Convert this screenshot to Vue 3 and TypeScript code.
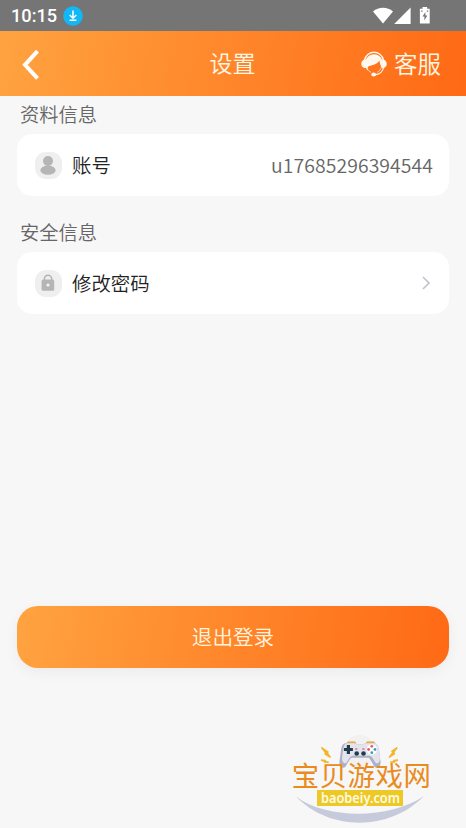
<script setup lang="ts">
interface Row {
  label: string
  icon: 'user' | 'lock'
  value?: string
}
interface Section {
  title: string
  row: Row
}

const sections: Section[] = [
  { title: '资料信息', row: { label: '账号', icon: 'user', value: 'u17685296394544' } },
  { title: '安全信息', row: { label: '修改密码', icon: 'lock' } },
]
</script>

<template>
  <div class="screen">
    <div class="status">
      <span class="time">10:15</span>
      <svg class="download" width="20" height="20" viewBox="0 0 20 20">
        <circle cx="10" cy="10" r="9.8" fill="#12b7f5" />
        <path d="M10 4.4V12M6.7 9l3.3 3.3L13.3 9M6.6 14.3h6.8" fill="none" stroke="#fff" stroke-width="1.5" />
      </svg>
      <svg class="signals" width="60" height="20" viewBox="0 0 60 20">
        <path d="M0 5.4C5.6.4 14.4.4 20 5.4L10 17.6Z" fill="#fff" />
        <path d="M37.6 1.6V18H21.2Z" fill="#fff" />
        <path d="M49.5 1h4.6v1.7h2.6V17.4H46.9V2.7h2.6Z" fill="#fff" />
        <path d="M52.4 6l-2.9 4.6h1.9v3.8l2.9-4.8h-1.9ZM48.2 4.4h1.4v1.3h-1.4ZM53.8 4.4h1.4v1.3h-1.4Z" fill="#757575" />
      </svg>
    </div>

    <header class="header">
      <svg class="back" width="18" height="32" viewBox="0 0 18 32">
        <path d="M15.5 2.2L3 15.8L15.5 29.4" fill="none" stroke="#fff" stroke-width="4" />
      </svg>
      <h1 class="title">设置</h1>
      <div class="service">
        <svg width="26" height="26" viewBox="0 0 26 26">
          <path d="M3.4 9.5C6-1.6 20-1.6 22.6 9.5" fill="none" stroke="#fff8ec" stroke-width="1.5" />
          <path d="M4.4 12C4.8 .2 21.2 .2 21.6 12L20.9 16.8C19.8 15 18.8 12.4 18.4 9.4C16.4 13.4 10.8 14 7.2 15.4C6.5 16.6 6.6 18 7.2 19.8C4.6 17.8 4 14.8 4.4 12Z" fill="#fff8ec" />
          <path d="M3.5 8.8h2.2v8.2H3.5C1.7 17 .3 15 .3 12.8S1.7 8.8 3.5 8.8ZM22.5 8.8h-1.9v8.2h1.9c1.8 0 3.2-1.9 3.2-4.2s-1.4-4-3.2-4Z" fill="#fff8ec" />
          <path d="M22.6 16C22 20.6 18.4 23.5 14 23.6" fill="none" stroke="#fff8ec" stroke-width="1.3" />
          <path d="M6.4 18C7.2 19.6 8.6 20.8 10 21.2M16.4 21.1C18.4 20.2 19.6 18.6 20.4 16.2" fill="none" stroke="#fff8ec" stroke-width=".7" />
          <ellipse cx="12.7" cy="23.5" rx="2.4" ry="1.9" fill="#fff8ec" />
        </svg>
        <span class="service-text">客服</span>
      </div>
    </header>

    <main class="content">
      <section v-for="s in sections" :key="s.title" class="section">
        <h2 class="label">{{ s.title }}</h2>
        <div class="card">
          <span class="badge">
            <svg v-if="s.row.icon === 'user'" width="27" height="27" viewBox="0 0 27 27">
              <circle cx="13" cy="9" r="5" fill="#b5b5b5" />
              <ellipse cx="13" cy="18.2" rx="7.6" ry="4.6" fill="#b5b5b5" />
            </svg>
            <svg v-else width="27" height="27" viewBox="0 0 27 27">
              <path d="M9.3 12V9a3.7 3.7 0 0 1 7.4 0V12" fill="none" stroke="#b5b5b5" stroke-width="1.5" />
              <rect x="6.6" y="9.6" width="12.6" height="11.2" rx="1.5" fill="#b5b5b5" />
              <circle cx="13" cy="15" r="1.6" fill="#f4f4f4" />
            </svg>
          </span>
          <span class="name">{{ s.row.label }}</span>
          <span v-if="s.row.value" class="value">{{ s.row.value }}</span>
          <svg v-else class="chevron" width="10" height="16" viewBox="0 0 10 16">
            <path d="M2 2l6 6-6 6" fill="none" stroke="#c0c4cc" stroke-width="1.7" />
          </svg>
        </div>
      </section>
      <button class="logout" type="button">退出登录</button>
    </main>

    <svg class="watermark" width="146" height="92" viewBox="288 734 146 92">
      <circle cx="359.5" cy="751" r="16" fill="#f1f1f1" />
      <path d="M296 796.5C325 819 389 820 424 796C389 832 329 831 296 796.5Z" fill="#c7cadb" />
      <path d="M347 743.2l1-1.3h7l1 1.3ZM366 743.2l1-1.3h7l1 1.3Z" fill="#edae43" stroke="#edae43" />
      <path d="M346 743.3h9l2 1.3h6l2-1.3h9c3 0 4.4 2.5 5 7l1.5 11c.4 4-1.3 6.4-4 6.4-3 0-4.7-8-8-10h-17c-3.3 2-5 10-8 10-2.7 0-4.4-2.4-4-6.4l1.5-11c.6-4.5 2-7 5-7Z" fill="#aeb0c3" />
      <path d="M346 743.3h9l2 1.3h6l2-1.3h9c3 0 4.4 2.5 5 7l1 8c0 4-2 5.6-3.5 5-2.5-1-3.5-7-7-7.5h-17c-3.5.5-4.5 6.5-7 7.5-1.5.6-3.5-1-3.5-5l1-8c.6-4.5 2-7 5-7Z" fill="#e3e4ed" />
      <path d="M348.4 745v9M343.9 749.5h9" stroke="#203d4d" stroke-width="3.2" />
      <circle cx="356.7" cy="753.5" r="2.3" fill="#203d4d" />
      <circle cx="363.5" cy="753.5" r="2.3" fill="#203d4d" />
      <path d="M355.2 749h2.2M362.3 749h2.2" stroke="#d73b67" stroke-width="1.2" />
      <circle cx="371.8" cy="749.5" r="5.2" fill="#fff" />
      <circle cx="371.8" cy="746.3" r="1.4" fill="#e55b62" />
      <circle cx="371.8" cy="752.7" r="1.4" fill="#35a8a0" />
      <circle cx="368.6" cy="749.5" r="1.4" fill="#e55b62" />
      <circle cx="375" cy="749.5" r="1.4" fill="#3ba1c2" />
      <path d="M321.5 747.5l6.5 4.5-.5 1.5 3 4-5.5-3.5.5-1.5ZM321 760l4 .3.5 1 3.2.9-4.3-.1-.5-1ZM397.2 747.5l-5.3 3.8.8 1.4-3.6 4.7 5.4-3.7-.8-1.5ZM398 760l-4 .3-.5 1-3.2.9 4.3-.1.5-1Z" fill="#f4b52c" stroke="#f4b52c" stroke-width="1.4" />
      <text x="291.8" y="786" class="wm-name" textLength="139">宝贝游戏网</text>
      <rect x="317" y="790" width="86" height="16" fill="#ecc926" />
      <text x="321" y="802.7" class="wm-site" textLength="79" lengthAdjust="spacingAndGlyphs">baobeiy.com</text>
    </svg>
  </div>
</template>

<style>
body {
  background: #f7f7f7;
}
</style>

<style scoped>
.screen {
  position: relative;
  width: 466px;
  height: 828px;
  overflow: hidden;
  background: #f7f7f7;
  font-family: "Noto Sans CJK SC", sans-serif;
  font-weight: 350;
}
.status {
  display: flex;
  align-items: center;
  box-sizing: border-box;
  height: 31px;
  padding: 0 33px 0 11px;
  background: #757575;
}
.time {
  width: 52px;
  padding-top: 1px;
  color: #fff;
  font: 500 18.2px/30px Roboto, sans-serif;
}
.signals {
  margin-left: auto;
}
.header {
  display: grid;
  grid-template-columns: 1fr auto 1fr;
  align-items: center;
  box-sizing: border-box;
  height: 65px;
  padding: 0 25px 0 22px;
  background: linear-gradient(100deg, #ffa340, #ff6915);
  color: #fff7e4;
}
.back {
  margin-top: 3px;
}
.title {
  margin: 0;
  padding: 0 0 2px 2px;
  font-size: 23px;
  line-height: 63px;
  font-weight: inherit;
}
.service {
  display: flex;
  align-items: center;
  justify-content: flex-end;
  gap: 7px;
  font-size: 23.5px;
  line-height: 65px;
}
.content {
  padding: 0 17px;
}
.section {
  margin-bottom: 18px;
}
.label {
  margin: 0;
  padding: 0 0 2px 3px;
  color: #666;
  font-size: 19.3px;
  line-height: 36px;
  font-weight: inherit;
}
.card {
  display: flex;
  align-items: center;
  box-sizing: border-box;
  height: 62px;
  padding: 0 16px 0 18px;
  border-radius: 15px;
  background: #fff;
  font-size: 19.4px;
}
.badge {
  width: 27px;
  height: 27px;
  border-radius: 11px;
  background: #efefef;
}
.badge svg {
  display: block;
}
.name {
  margin-left: 10px;
  padding-bottom: 2px;
  color: #222;
}
.value {
  margin-left: auto;
  padding-bottom: 2px;
  color: #666;
  letter-spacing: 0.08px;
}
.chevron {
  margin: 0 2px 0 auto;
}
.logout {
  display: block;
  width: 432px;
  height: 62px;
  margin-top: 292px;
  padding: 0 0 2px;
  border: 0;
  border-radius: 21px;
  background: linear-gradient(100deg, #ffa340, #ff6915);
  box-shadow: 0 4px 14px rgba(0, 0, 0, 0.05);
  color: #fff5df;
  font-family: inherit;
  font-weight: inherit;
  font-size: 20.6px;
}
.watermark {
  position: absolute;
  left: 288px;
  top: 734px;
}
.wm-name {
  fill: #e98b1d;
  font-family: "Liberation Sans", "Noto Sans CJK SC", sans-serif;
  font-size: 27.4px;
  font-weight: 400;
}
.wm-site {
  fill: #fffbe0;
  font-family: "Noto Sans", sans-serif;
  font-size: 14.5px;
  font-weight: 600;
}
</style>
